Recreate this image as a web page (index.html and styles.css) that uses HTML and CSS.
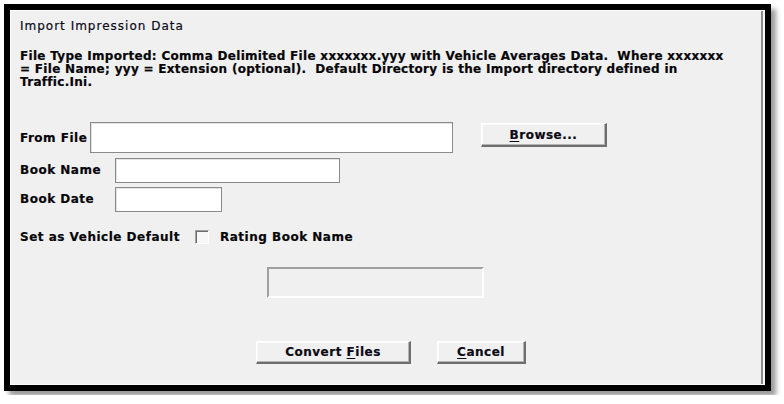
FILE: index.html
```html
<!DOCTYPE html>
<html>
<head>
<meta charset="utf-8">
<link rel="stylesheet" href="styles.css">
</head>
<body>
<div class="frame">
  <div class="panel">
    <div class="title">Import Impression Data</div>
    <p class="desc">File Type Imported: Comma Delimited File xxxxxxx.yyy with Vehicle Averages Data.&nbsp; Where xxxxxxx<br>= File Name; yyy = Extension (optional).&nbsp; Default Directory is the Import directory defined in<br>Traffic.Ini.</p>

    <div class="row row-file">
      <span class="label label-file">From File</span>
      <span class="field field-file"></span>
      <span class="btn btn-browse"><span><u>B</u>rowse...</span></span>
    </div>
    <div class="row row-name">
      <span class="label label-book">Book Name</span>
      <span class="field field-name"></span>
    </div>
    <div class="row row-date">
      <span class="label label-book">Book Date</span>
      <span class="field field-date"></span>
    </div>
    <div class="row row-check">
      <span class="label label-default">Set as Vehicle Default</span>
      <span class="checkbox"></span>
      <span class="label">Rating Book Name</span>
    </div>
    <div class="sunken"></div>
    <div class="row row-buttons">
      <span class="btn btn-convert"><span>Convert <u>F</u>iles</span></span>
      <span class="btn btn-cancel"><span><u>C</u>ancel</span></span>
    </div>
  </div>
</div>
</body>
</html>
```
FILE: styles.css
```css
html, body {
  margin: 0;
  padding: 0;
  background: #ffffff;
}

body {
  padding: 4px;
  font-family: "DejaVu Sans", "Liberation Sans", sans-serif;
  color: #050508;
}

.frame {
  width: 755px;
  height: 375px;
  border: 6px solid #000;
  box-shadow: 5px 5px 5px rgba(0, 0, 0, 0.4);
  background: #f0f0f0;
}

.panel {
  height: 100%;
  box-sizing: border-box;
  padding: 10px 0 0 10px;
  background: #f0f0f0;
  box-shadow: inset 1px 1px 0 #ffffff, inset 0 -1px 0 #fafafa, inset -2px 0 0 #f8f8f8, inset -4px 0 0 #8c8c8c;
}

.title {
  font-size: 12px;
  line-height: 13px;
  letter-spacing: 1px;
  font-weight: 400;
  color: #0a0a18;
  -webkit-text-stroke: 0.2px #0a0a18;
}

.desc {
  margin: 17px 0 0 0;
  font-size: 12px;
  line-height: 13px;
  font-weight: 700;
  letter-spacing: 0.3px;
  white-space: nowrap;
  -webkit-text-stroke: 0.2px #050508;
}

.row {
  display: flex;
  align-items: center;
}

.label {
  font-size: 12px;
  font-weight: 700;
  letter-spacing: 0.5px;
  line-height: 13px;
  white-space: nowrap;
  -webkit-text-stroke: 0.2px #050508;
}

.label-file { width: 70px; }
.label-book { width: 95px; }
.label-default { width: 175px; }

.field {
  display: block;
  box-sizing: border-box;
  background: #ffffff;
  border: 1px solid #8a8a8a;
  box-shadow: inset 1px 1px 0 #e4e4e4;
}

.row-file { margin-top: 33px; align-items: flex-start; }
.row-file .label { margin-top: 10px; }
.field-file { width: 363px; height: 31px; }

.row-name { margin-top: 5px; }
.field-name { width: 225px; height: 25px; }

.row-date { margin-top: 4px; }
.field-date { width: 107px; height: 25px; }

.row-check { margin-top: 18px; }

.checkbox {
  display: block;
  box-sizing: border-box;
  width: 14px;
  height: 14px;
  margin-right: 11px;
  background: #f7f7f7;
  border-top: 1px solid #a0a0a0;
  border-left: 1px solid #a0a0a0;
  border-right: 1px solid #ffffff;
  border-bottom: 1px solid #ffffff;
  box-shadow: inset 1px 1px 0 #6c6c6c;
}

.sunken {
  box-sizing: border-box;
  width: 217px;
  height: 31px;
  margin: 23px 0 0 247px;
  border-top: 2px solid #a0a0a0;
  border-left: 2px solid #a0a0a0;
  border-right: 2px solid #ffffff;
  border-bottom: 2px solid #ffffff;
}

.btn {
  display: flex;
  align-items: center;
  justify-content: center;
  box-sizing: border-box;
  height: 23px;
  background: #f0f0f0;
  border-top: 1px solid #ffffff;
  border-left: 1px solid #ffffff;
  border-right: 2px solid #6e6e6e;
  border-bottom: 2px solid #6e6e6e;
  box-shadow: inset -1px -1px 0 #b4b4b4, inset 1px 1px 0 #fbfbfb;
  font-size: 12px;
  font-weight: 700;
  letter-spacing: 0.5px;
  color: #0a0a14;
  white-space: nowrap;
  -webkit-text-stroke: 0.2px #0a0a14;
}

.btn u {
  text-decoration-thickness: 1px;
  text-underline-offset: 2px;
}

.btn-browse {
  width: 126px;
  height: 24px;
  margin: 1px 0 0 28px;
}

.row-buttons { margin: 43px 0 0 236px; }
.btn-convert { width: 155px; }
.btn-cancel { width: 89px; margin-left: 26px; }
```
